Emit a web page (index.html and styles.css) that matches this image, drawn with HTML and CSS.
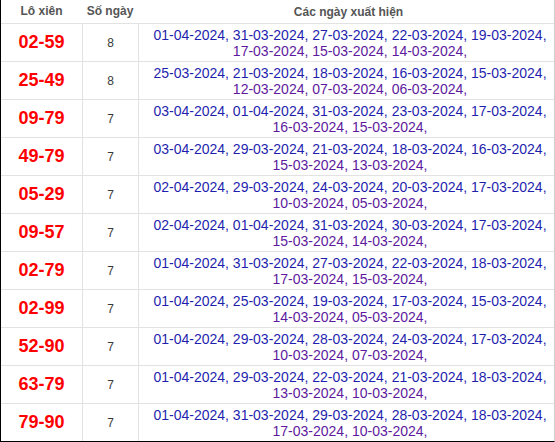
FILE: index.html
```html
<!DOCTYPE html>
<html lang="vi">
<head>
<meta charset="utf-8">
<title>Lô xiên</title>
<link rel="stylesheet" href="styles.css">
</head>
<body>
<div class="board">
  <div class="row head">
    <div class="cell">Lô xiên</div>
    <div class="cell">Số ngày</div>
    <div class="cell">Các ngày xuất hiện</div>
  </div>
  <div class="row">
    <div class="cell pair">02-59</div>
    <div class="cell count">8</div>
    <div class="cell"><div class="dates">01-04-2024, 31-03-2024, 27-03-2024, 22-03-2024, 19-03-2024, 17-03-2024, 15-03-2024, 14-03-2024,</div></div>
  </div>
  <div class="row">
    <div class="cell pair">25-49</div>
    <div class="cell count">8</div>
    <div class="cell"><div class="dates">25-03-2024, 21-03-2024, 18-03-2024, 16-03-2024, 15-03-2024, 12-03-2024, 07-03-2024, 06-03-2024,</div></div>
  </div>
  <div class="row">
    <div class="cell pair">09-79</div>
    <div class="cell count">7</div>
    <div class="cell"><div class="dates">03-04-2024, 01-04-2024, 31-03-2024, 23-03-2024, 17-03-2024, 16-03-2024, 15-03-2024,</div></div>
  </div>
  <div class="row">
    <div class="cell pair">49-79</div>
    <div class="cell count">7</div>
    <div class="cell"><div class="dates">03-04-2024, 29-03-2024, 21-03-2024, 18-03-2024, 16-03-2024, 15-03-2024, 13-03-2024,</div></div>
  </div>
  <div class="row">
    <div class="cell pair">05-29</div>
    <div class="cell count">7</div>
    <div class="cell"><div class="dates">02-04-2024, 29-03-2024, 24-03-2024, 20-03-2024, 17-03-2024, 10-03-2024, 05-03-2024,</div></div>
  </div>
  <div class="row">
    <div class="cell pair">09-57</div>
    <div class="cell count">7</div>
    <div class="cell"><div class="dates">02-04-2024, 01-04-2024, 31-03-2024, 30-03-2024, 17-03-2024, 15-03-2024, 14-03-2024,</div></div>
  </div>
  <div class="row">
    <div class="cell pair">02-79</div>
    <div class="cell count">7</div>
    <div class="cell"><div class="dates">01-04-2024, 31-03-2024, 27-03-2024, 22-03-2024, 18-03-2024, 17-03-2024, 15-03-2024,</div></div>
  </div>
  <div class="row">
    <div class="cell pair">02-99</div>
    <div class="cell count">7</div>
    <div class="cell"><div class="dates">01-04-2024, 25-03-2024, 19-03-2024, 17-03-2024, 15-03-2024, 14-03-2024, 05-03-2024,</div></div>
  </div>
  <div class="row">
    <div class="cell pair">52-90</div>
    <div class="cell count">7</div>
    <div class="cell"><div class="dates">01-04-2024, 29-03-2024, 28-03-2024, 24-03-2024, 17-03-2024, 10-03-2024, 07-03-2024,</div></div>
  </div>
  <div class="row">
    <div class="cell pair">63-79</div>
    <div class="cell count">7</div>
    <div class="cell"><div class="dates">01-04-2024, 29-03-2024, 22-03-2024, 21-03-2024, 18-03-2024, 13-03-2024, 10-03-2024,</div></div>
  </div>
  <div class="row">
    <div class="cell pair">79-90</div>
    <div class="cell count">7</div>
    <div class="cell"><div class="dates">01-04-2024, 31-03-2024, 29-03-2024, 28-03-2024, 18-03-2024, 17-03-2024, 10-03-2024,</div></div>
  </div>
</div>
</body>
</html>
```

FILE: styles.css
```css
html, body {
  margin: 0;
  padding: 0;
  background: #fff;
}

body {
  font-family: "Liberation Sans", Arial, sans-serif;
}

.board {
  width: 555px;
  height: 442px;
  box-sizing: border-box;
  border-left: 1px solid #000;
  border-right: 1px solid #cfcfcf;
  border-bottom: 1px solid #000;
  overflow: hidden;
}

.row {
  display: grid;
  grid-template-columns: 81px 56px 1fr;
  height: 38px;
  box-sizing: border-box;
  border-bottom: 1px solid #e2e2e2;
}

.row:last-child {
  border-bottom: none;
  height: 37px;
}

.cell {
  display: flex;
  align-items: center;
  justify-content: center;
  text-align: center;
  min-width: 0;
}

.row .cell + .cell {
  border-left: 1px solid #e2e2e2;
}

.row.head {
  height: 24px;
}

.row.head .cell {
  border-left: none;
  font-size: 12px;
  font-weight: bold;
  color: #555;
  padding-bottom: 1px;
}

.row.head .cell:last-child {
  padding-left: 7px;
}

.pair {
  font-size: 18px;
  font-weight: bold;
  color: #ff0000;
}

.count {
  font-size: 12px;
  color: #3a3a3a;
}

.row .cell:last-child {
  padding: 0 2px 0 9px;
}

.dates {
  font-size: 14px;
  line-height: 16px;
  color: #5e1a9e;
}

.dates::first-line {
  color: #1f1fae;
}
```
